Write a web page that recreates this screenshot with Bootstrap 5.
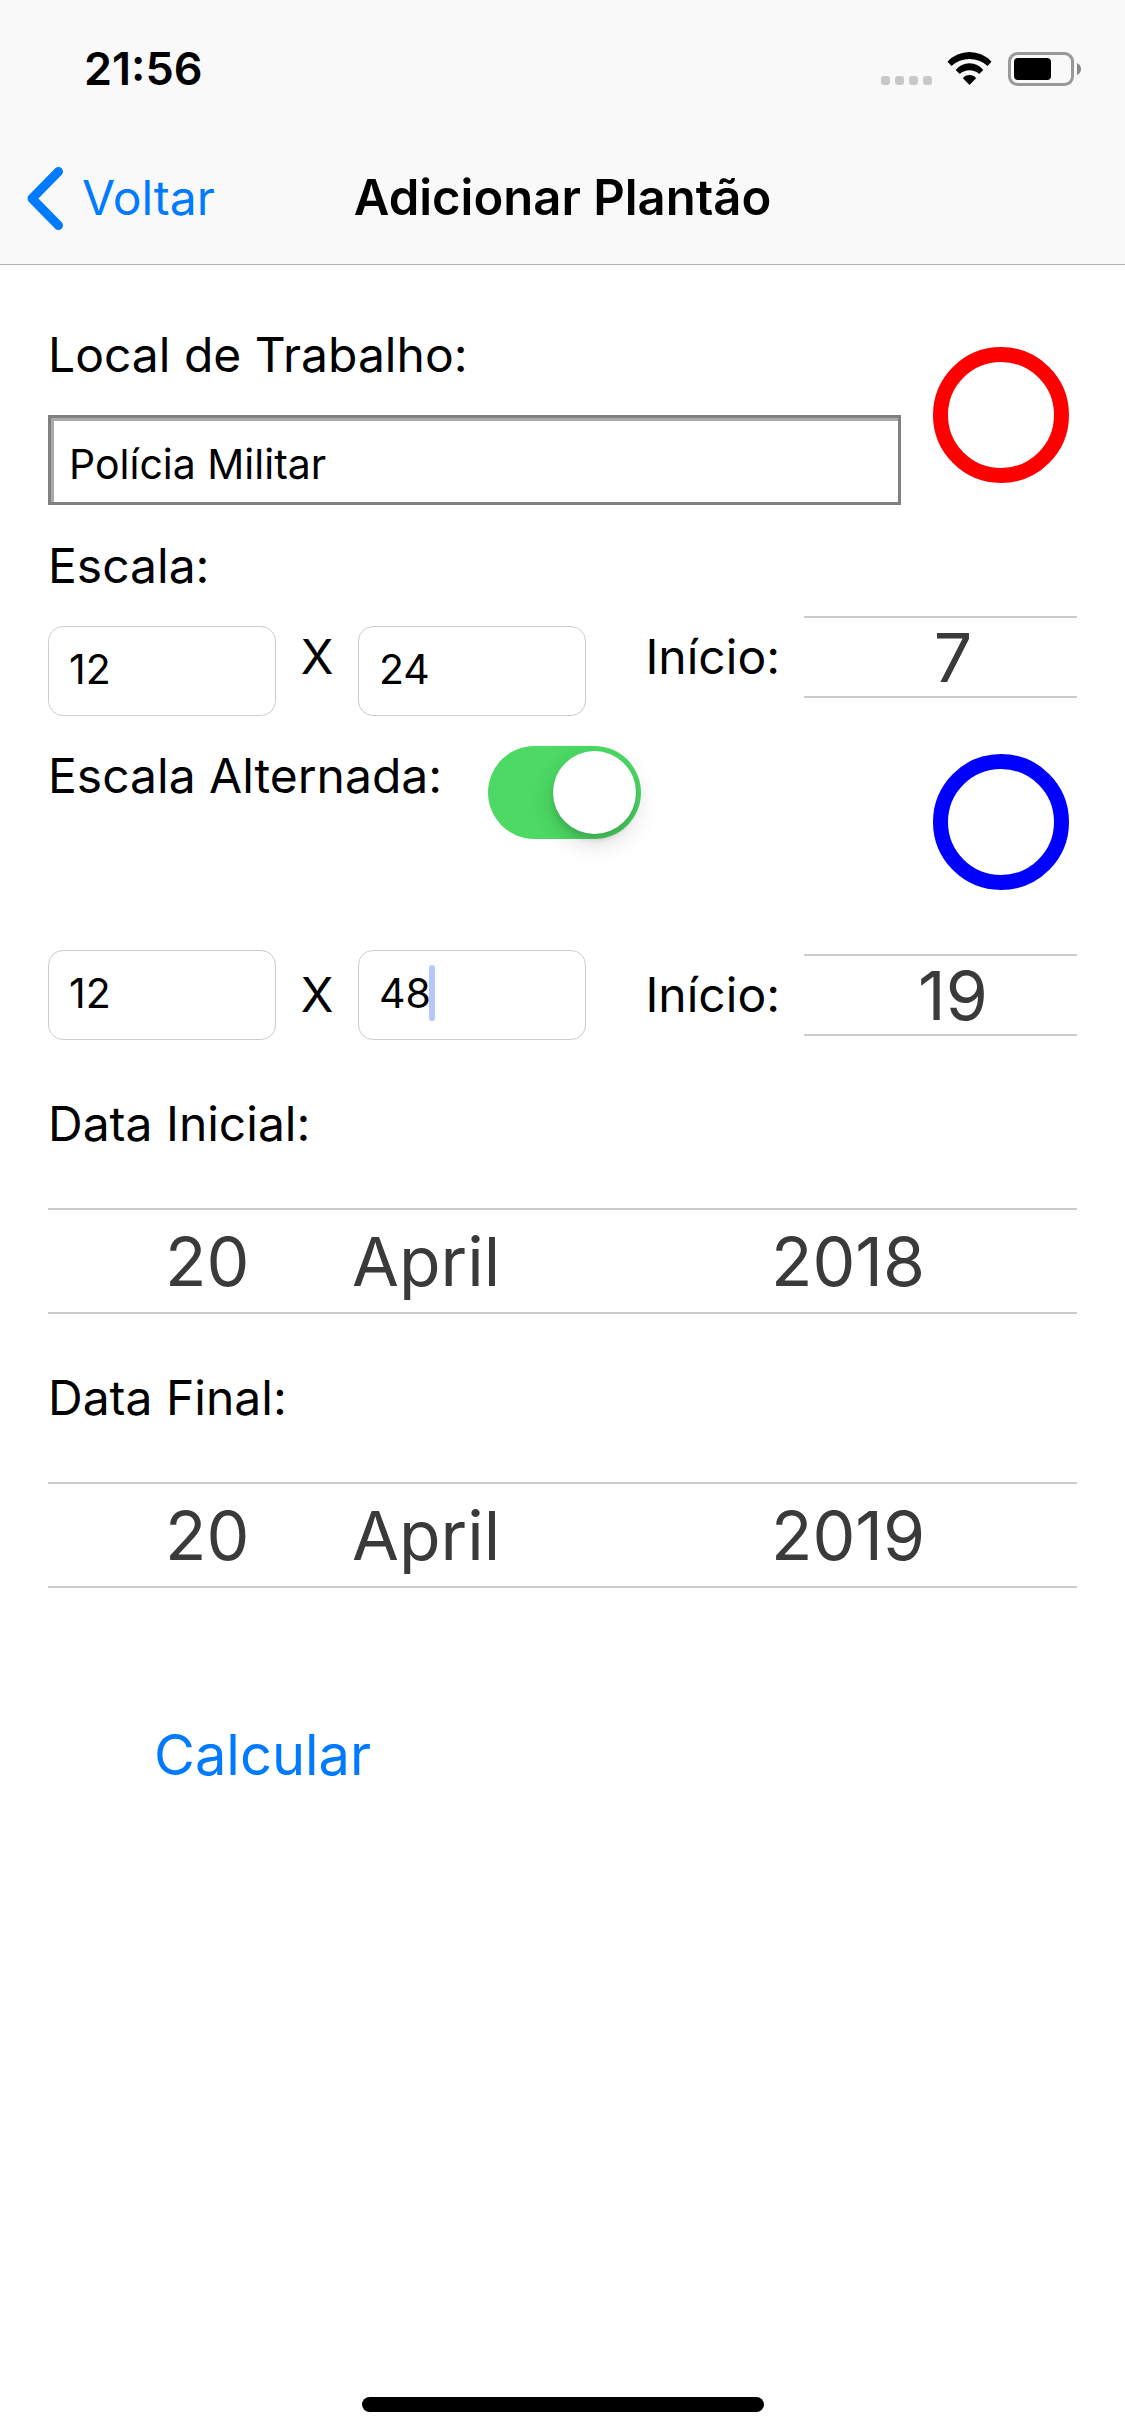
<!DOCTYPE html>
<html lang="pt-BR">
<head>
<meta charset="utf-8">
<meta name="viewport" content="width=device-width, initial-scale=1">
<title>Adicionar Plantão</title>
<link href="https://cdn.jsdelivr.net/npm/bootstrap@5.3.0/dist/css/bootstrap.min.css" rel="stylesheet">
<style>
  :root { --ios-blue: #007aff; --hairline: #cbcbcb; --line: 60px; }
  body { font-family: Inter, "Liberation Sans", sans-serif; font-size: 48px; line-height: var(--line); color: #000; background: #fff; }
  .top-area { background: #f9f9f9; border-bottom: 1px solid #b2b2b2; }
  .status-row { height: 132px; padding: 6px 44px 0 84px; }
  .clock { font-size: 45px; font-weight: 600; }
  .status-icons { height: 34px; }
  .title-row { display: grid; grid-template-columns: 1fr auto 1fr; height: 132px; padding: 0 27px; }
  .back-link { color: var(--ios-blue); gap: 19px; }
  .screen-title { font-size: 49px; line-height: var(--line); font-weight: 600; }
  .screen-body { padding: 60px 48px 0; }
  .workplace { gap: 32px; }
  .workplace-name { margin-top: 30px; height: 90px; padding: 8px 18px 0; border: 3px solid #808080; border-radius: 0; box-shadow: inset 3px 3px #aaa; font-size: 41px; color: #000; background: #fff; }
  .ring { width: 136px; height: 136px; border: 15px solid; border-radius: 50%; background: none; padding: 0; }
  .ring-red { border-color: #f00; }
  .ring-blue { border-color: #00f; margin-top: 8px; }
  .shift-label { margin-top: 31px; }
  .shift-grid { display: grid; grid-template-columns: 228fr 82fr 228fr 218fr 273fr; }
  .shift-first { margin-top: 20px; align-items: start; }
  .shift-first .hours { margin-top: 10px; }
  .shift-first .mid-text { line-height: 82px; }
  .shift-second { margin-top: 60px; align-items: center; }
  .hours { height: 90px; padding: 0 20px 4px; border: 1px solid #ccc; border-radius: 15px; font-size: 41px; color: #000; background: #fff; }
  .caret { left: 71px; top: 15px; width: 6px; height: 56px; border-radius: 3px; background: #b7c6fb; }
  .wheel { appearance: none; border: 0; border-radius: 0; background: none; color: #3a3a3a; font-size: 68px; line-height: 78px; padding: 0; width: 100%; }
  .wheel-frame { border: solid var(--hairline); border-width: 2px 0; }
  .wheel-hour { height: 78px; padding-left: 25px; text-align: center; }
  .alternate { margin-top: 30px; }
  .alternate .form-check-input { float: none; position: relative; width: 153px; height: 93px; margin: 0 0 0 46px; border: 0; border-radius: 47px; background: #4cd964; }
  .alternate .form-check-input::before { content: ""; position: absolute; top: 5px; right: 5px; width: 83px; height: 83px; border-radius: 50%; background: #fff; box-shadow: 0 9px 24px rgba(0,0,0,.15), 0 6px 6px rgba(0,0,0,.1); }
  .date-block { margin-top: 54px; }
  .date-grid { display: grid; grid-template-columns: 304fr 419fr 306fr; margin-top: 54px; height: 106px; align-items: center; }
  .date-grid .wheel-day { padding-left: 117px; }
  .calc-btn { margin: 131px 0 0 106px; padding: 0; border: 0; font-size: 56px; line-height: 72px; color: var(--ios-blue); }
  .home-bar { width: 402px; height: 15px; border-radius: 8px; background: #000; margin-bottom: 24px; }
</style>
<script src="https://cdn.jsdelivr.net/npm/bootstrap@5.3.0/dist/js/bootstrap.bundle.min.js"></script>
</head>
<body class="min-vh-100 d-flex flex-column">
<header class="top-area">
  <div class="status-row d-flex align-items-center justify-content-between">
    <span class="clock">21:56</span>
    <svg class="status-icons" width="200" height="34" viewBox="0 0 200 34" aria-hidden="true">
      <g fill="#c8c8c8">
        <rect x="0" y="24" width="9" height="9" rx="3"/><rect x="14" y="24" width="9" height="9" rx="3"/>
        <rect x="28" y="24" width="9" height="9" rx="3"/><rect x="42" y="24" width="9" height="9" rx="3"/>
      </g>
      <g transform="translate(66 0)">
        <path d="M.5 9.7A30 30 0 0 1 44.5 9.7L40.5 14A26.6 26.6 0 0 0 4.5 14Z"/>
        <path d="M8.7 18A17.6 17.6 0 0 1 36.3 18L32.2 22A14.6 14.6 0 0 0 12.8 22Z"/>
        <path d="M15.9 26.3A8.2 8.2 0 0 1 29.1 26.3L22.5 33Z"/>
      </g>
      <rect x="128.500" y="1.500" width="63" height="31" rx="8" fill="none" stroke="#999" stroke-width="3"/>
      <rect x="133" y="6" width="37" height="22" rx="4"/>
      <path d="M196 11Q200 13 200 17T196 23Z" fill="#888"/>
    </svg>
  </div>
  <nav class="title-row align-items-center">
    <a href="#" class="back-link d-flex align-items-center text-decoration-none">
      <svg width="36" height="63" viewBox="0 0 36 63" fill="none" stroke="currentColor" stroke-width="9" stroke-linecap="round" stroke-linejoin="round" aria-hidden="true"><path d="M31.500 4.500L5 31.500L31.500 58.500"/></svg>
      Voltar
    </a>
    <h1 class="screen-title m-0">Adicionar Plantão</h1>
  </nav>
</header>

<main class="screen-body flex-grow-1">
  <form>
    <div class="workplace d-flex align-items-center">
      <div class="flex-grow-1">
        <label class="d-block" for="local">Local de Trabalho:</label>
        <input class="workplace-name form-control" id="local" type="text" value="Polícia Militar">
      </div>
      <button type="button" class="ring ring-red me-2 flex-shrink-0" aria-label="Cor da escala"></button>
    </div>

    <label class="shift-label d-block" for="h1">Escala:</label>
    <div class="shift-grid shift-first">
      <input class="hours form-control" id="h1" type="text" inputmode="numeric" value="12">
      <label class="mid-text text-center" for="h2">X</label>
      <input class="hours form-control" id="h2" type="text" inputmode="numeric" value="24">
      <label class="mid-text text-end pe-4" for="inicio1">Início:</label>
      <div class="wheel-frame"><select class="wheel wheel-hour d-block" id="inicio1"><option>7</option><option>19</option></select></div>
    </div>

    <div class="alternate d-flex align-items-start">
      <label for="alt">Escala Alternada:</label>
      <input class="form-check-input" id="alt" type="checkbox" role="switch" checked>
      <button type="button" class="ring ring-blue me-2 ms-auto" aria-label="Cor da escala alternada"></button>
    </div>

    <div class="shift-grid shift-second">
      <input class="hours form-control" id="h3" type="text" inputmode="numeric" value="12" aria-label="Horas de trabalho">
      <label class="mid-text text-center" for="h4">X</label>
      <div class="position-relative">
        <input class="hours form-control" id="h4" type="text" inputmode="numeric" value="48">
        <span class="caret position-absolute"></span>
      </div>
      <label class="mid-text text-end pe-4" for="inicio2">Início:</label>
      <div class="wheel-frame"><select class="wheel wheel-hour d-block" id="inicio2"><option>19</option><option>7</option></select></div>
    </div>

    <div class="date-block">
      <label class="d-block" for="d1">Data Inicial:</label>
      <div class="date-grid wheel-frame">
        <select class="wheel wheel-day" id="d1"><option>20</option></select>
        <select class="wheel" aria-label="Mês inicial"><option>April</option></select>
        <select class="wheel" aria-label="Ano inicial"><option>2018</option></select>
      </div>
    </div>
    <div class="date-block">
      <label class="d-block" for="d2">Data Final:</label>
      <div class="date-grid wheel-frame">
        <select class="wheel wheel-day" id="d2"><option>20</option></select>
        <select class="wheel" aria-label="Mês final"><option>April</option></select>
        <select class="wheel" aria-label="Ano final"><option>2019</option></select>
      </div>
    </div>
    <button type="button" class="calc-btn btn">Calcular</button>
  </form>
</main>
<footer class="d-flex justify-content-center"><div class="home-bar"></div></footer>
</body>
</html>
